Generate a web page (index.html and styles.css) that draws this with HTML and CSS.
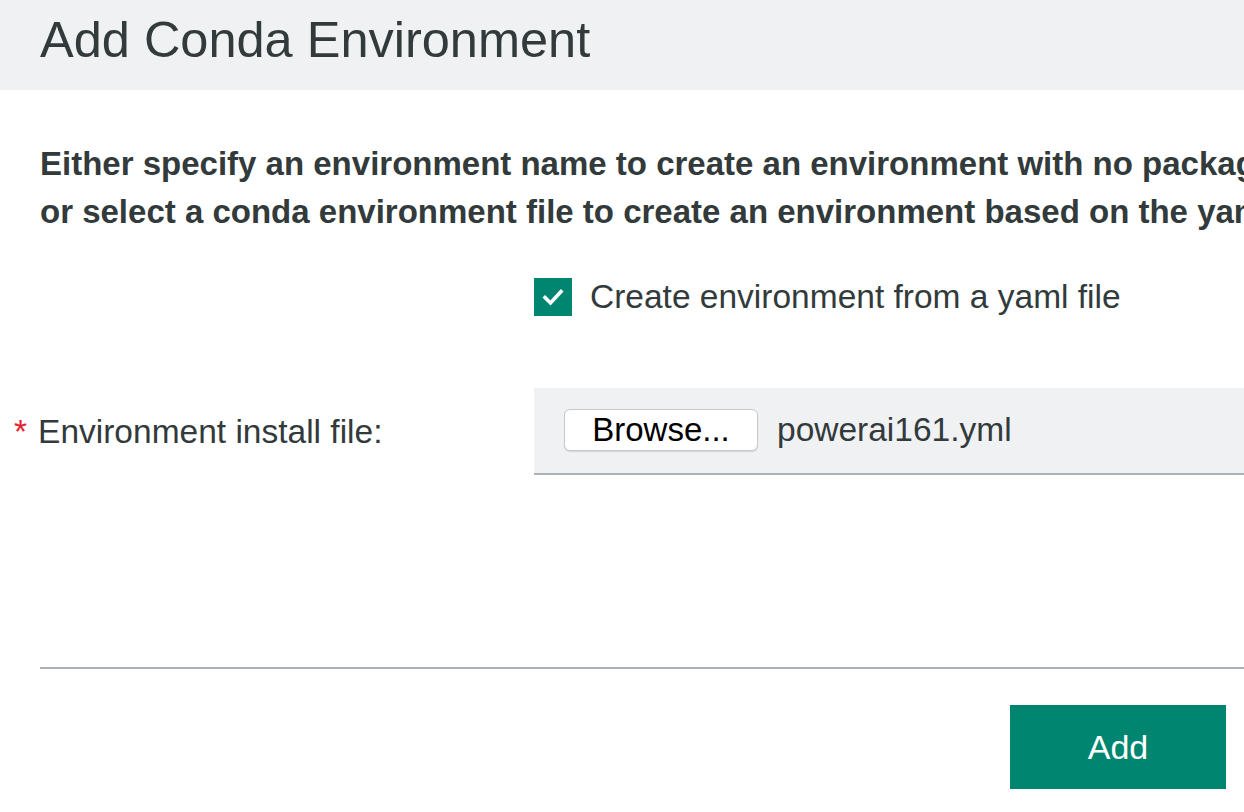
FILE: index.html
```html
<!DOCTYPE html>
<html lang="en">
<head>
<meta charset="utf-8">
<title>Add Conda Environment</title>
<link rel="stylesheet" href="styles.css">
</head>
<body>
<div class="dialog">
  <header class="dialog-header">
    <h1 class="dialog-title">Add Conda Environment</h1>
  </header>
  <div class="dialog-body">
    <p class="intro">Either specify an environment name to create an environment with no packages,<br>or select a conda environment file to create an environment based on the yaml file.</p>
    <div class="row check-row">
      <div class="row-label"></div>
      <label class="check">
        <span class="check-box">
          <svg width="38" height="38" viewBox="0 0 38 38"><polyline points="11,19.5 16.5,25 27,13.5" fill="none" stroke="#fff" stroke-width="3.6" stroke-linecap="square"/></svg>
        </span>
        <span class="check-text">Create environment from a yaml file</span>
      </label>
    </div>
    <div class="row field-row">
      <div class="row-label"><span class="req">*</span>Environment install file:</div>
      <div class="file-field">
        <span class="browse">Browse...</span>
        <span class="file-name">powerai161.yml</span>
      </div>
    </div>
  </div>
  <footer class="dialog-footer">
    <button class="btn-primary">Add</button>
  </footer>
</div>
</body>
</html>
```

FILE: styles.css
```css
html, body {
  margin: 0;
  padding: 0;
  background: #ffffff;
  overflow: hidden;
}
body {
  width: 1244px;
  height: 812px;
  font-family: "Liberation Sans", Arial, Helvetica, sans-serif;
  color: #323a3b;
}
.dialog {
  width: 1244px;
}
.dialog-header {
  background: #f0f1f3;
  height: 90px;
  padding-left: 40px;
  box-sizing: border-box;
}
.dialog-title {
  margin: 0;
  font-size: 50.5px;
  font-weight: normal;
  line-height: 80px;
  white-space: nowrap;
  color: #323a3b;
}
.dialog-body {
  padding-top: 50px;
}
.intro {
  margin: 0;
  padding-left: 40px;
  font-size: 33px;
  font-weight: bold;
  line-height: 48px;
  white-space: nowrap;
  color: #323a3b;
}
.row {
  display: flex;
  align-items: center;
}
.row-label {
  width: 534px;
  flex: none;
  padding-left: 40px;
  box-sizing: border-box;
  font-size: 33.5px;
  white-space: nowrap;
}
.check-row {
  margin-top: 42px;
  height: 38px;
}
.check {
  display: flex;
  align-items: center;
  gap: 18px;
}
.check-box {
  width: 38px;
  height: 38px;
  background: #008571;
  display: block;
}
.check-box svg {
  display: block;
}
.check-text {
  font-size: 33.5px;
  white-space: nowrap;
}
.field-row {
  margin-top: 72px;
}
.req {
  color: #e71d32;
  margin-left: -26px;
  margin-right: 11px;
  font-size: 33.5px;
}
.file-field {
  flex: 1;
  height: 87px;
  box-sizing: border-box;
  background: #f0f1f3;
  border-bottom: 2px solid #a9b3b3;
  display: flex;
  align-items: center;
  padding-left: 30px;
  padding-bottom: 2px;
  gap: 19px;
  white-space: nowrap;
}
.browse {
  width: 194px;
  height: 42px;
  box-sizing: border-box;
  background: #ffffff;
  border: 1px solid #c9c9c9;
  border-radius: 6px;
  box-shadow: 0 1px 1px rgba(0,0,0,0.12);
  display: flex;
  align-items: center;
  justify-content: center;
  font-family: "Liberation Sans", Arial, sans-serif;
  font-size: 33px;
  color: #000;
}
.file-name {
  font-size: 33.5px;
  color: #323a3b;
}
.dialog-footer {
  margin-top: 192px;
  margin-left: 40px;
  border-top: 2px solid #a9b3b3;
  padding-top: 36px;
  display: flex;
  justify-content: flex-end;
  padding-right: 18px;
}
.btn-primary {
  width: 216px;
  height: 84px;
  background: #008571;
  border: none;
  color: #ffffff;
  font-family: "Liberation Sans", Arial, sans-serif;
  font-size: 34px;
  padding: 0;
}
```
